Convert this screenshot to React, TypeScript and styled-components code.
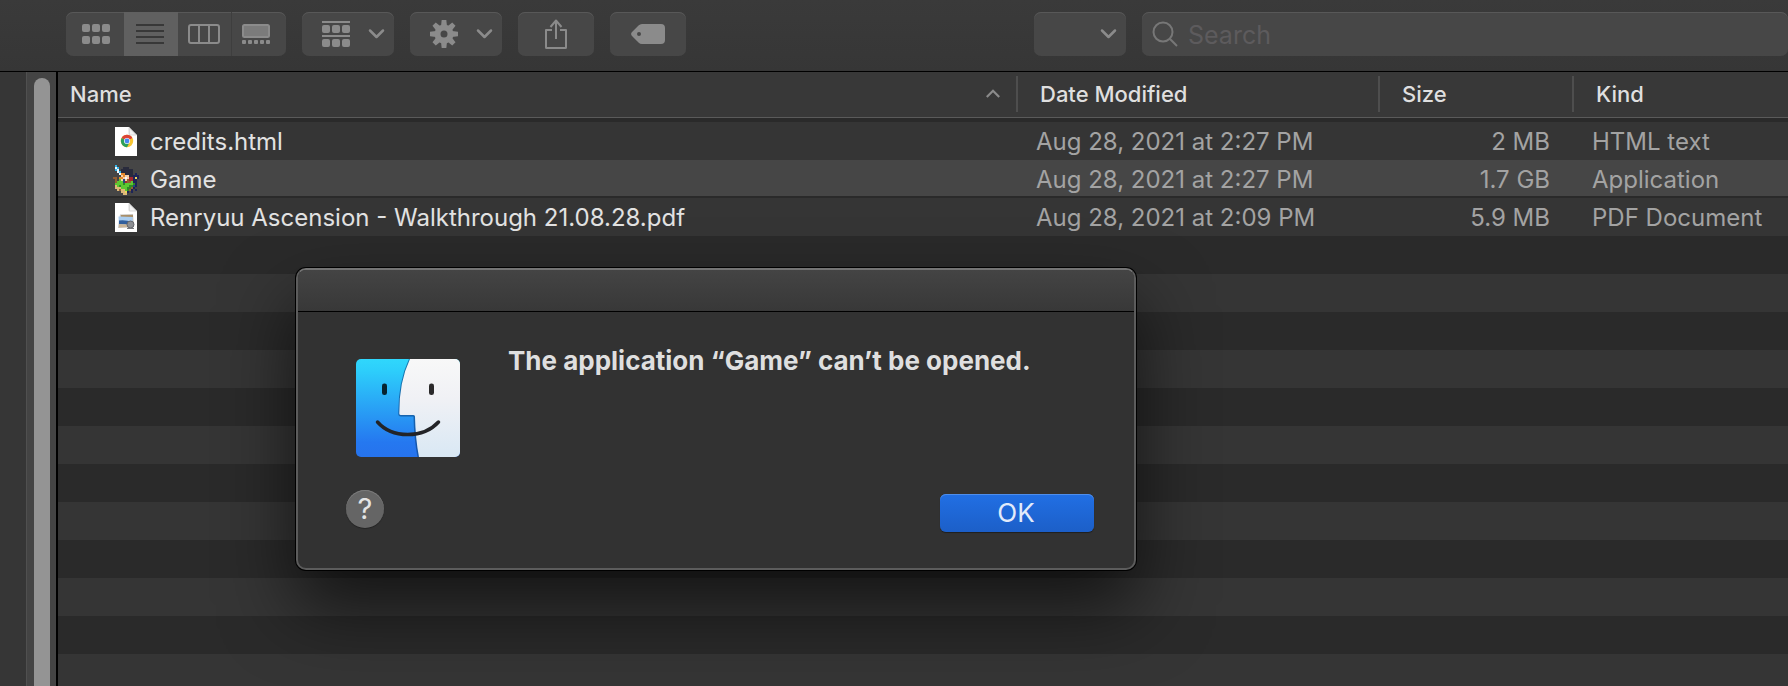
import React from 'react';
import styled, { createGlobalStyle } from 'styled-components';

const GlobalStyle = createGlobalStyle`
  *, *::before, *::after { box-sizing: border-box; }
  body {
    margin: 0;
    background: #2a2a2a;
    font-family: Inter, "Liberation Sans", sans-serif;
    color: #dfdfdf;
  }
  button, input, select { font: inherit; color: inherit; }
`;

const Window = styled.div`
  position: relative;
  display: flex;
  flex-direction: column;
  min-height: 100vh;
  overflow: hidden;
`;

/* ---------- toolbar ---------- */

const Toolbar = styled.header`
  display: flex;
  gap: 16px;
  padding: 12px 0 15px 66px;
  background: linear-gradient(#3a3a3a, #363636);
  border-bottom: 1px solid #000;
`;

const Segments = styled.div`
  display: flex;
  flex: none;
  height: 44px;
  border-radius: 7px;
  overflow: hidden;
  background: #474747;
  box-shadow: inset 0 1px 0 #585858;
`;

const Segment = styled.button<{ $active?: boolean; $divided?: boolean }>`
  display: flex;
  align-items: center;
  justify-content: center;
  width: 54px;
  padding: 0 2px 0 0;
  border: 0;
  border-right: ${(p) => (p.$divided ? '1px solid #3e3e3e' : '0')};
  background: ${(p) => (p.$active ? '#606060' : 'transparent')};
  color: ${(p) => (p.$active ? '#383838' : '#8b8b8b')};
  &:first-child { width: 58px; padding: 0 0 0 2px; }
  &:last-child { padding: 0 6px 0 0; }
`;

const ToolButton = styled.button<{ $menu?: boolean }>`
  display: flex;
  flex: none;
  align-items: center;
  justify-content: ${(p) => (p.$menu ? 'space-between' : 'center')};
  width: ${(p) => (p.$menu ? 92 : 76)}px;
  height: 44px;
  padding: ${(p) => (p.$menu ? '0 9px 0 19px' : '0')};
  border: 0;
  border-radius: 7px;
  background: #474747;
  box-shadow: inset 0 1px 0 #585858;
  color: #8b8b8b;
`;

const Spacer = styled.div`
  flex: 0 1 316px;
`;

const PathMenu = styled.label`
  display: flex;
  flex: none;
  align-items: center;
  width: 92px;
  height: 44px;
  padding-right: 9px;
  border-radius: 7px;
  background: #474747;
  box-shadow: inset 0 1px 0 #585858;
  color: #8b8b8b;
  select {
    flex: 1;
    min-width: 0;
    height: 100%;
    border: 0;
    background: transparent;
    appearance: none;
  }
`;

const SearchField = styled.label`
  display: flex;
  flex: 1;
  align-items: center;
  gap: 10px;
  min-width: 160px;
  height: 44px;
  padding-left: 10px;
  border-radius: 7px;
  background: #474747;
  box-shadow: inset 0 1px 0 #585858;
  color: #777;
  input {
    flex: 1;
    min-width: 0;
    padding: 2px 0 0;
    border: 0;
    outline: 0;
    background: transparent;
    font-size: 25px;
    line-height: 32px;
  }
  input::placeholder { color: #5d5b5d; opacity: 1; }
`;

/* ---------- file list ---------- */

const Content = styled.div`
  display: flex;
  flex: 1;
`;

const Sidebar = styled.aside`
  flex: none;
  width: 27px;
  background: #363636;
  border-right: 1px solid #505050;
`;

const ScrollTrack = styled.div`
  display: flex;
  flex: none;
  width: 31px;
  padding: 6px 0 0 7px;
  background: #444;
  border-right: 2px solid #000;
`;

const ScrollThumb = styled.div`
  width: 16px;
  border-radius: 8px 8px 0 0;
  background: #949494;
`;

const FileArea = styled.main`
  display: flex;
  flex: 1;
  flex-direction: column;
  min-width: 0;
`;

const FileTable = styled.table`
  width: 100%;
  table-layout: fixed;
  border-collapse: separate;
  border-spacing: 0;
`;

const Col = styled.col<{ $width?: number }>`
  width: ${(p) => (p.$width ? `${p.$width}px` : 'auto')};
`;

const HeadCell = styled.th`
  padding: 0;
  border-bottom: 4px solid #2a2a2a;
  font-size: 22px;
  font-weight: 500;
  line-height: 28px;
  text-align: left;
`;

const HeadContent = styled.div<{ $first?: boolean }>`
  display: flex;
  align-items: center;
  justify-content: space-between;
  height: 46px;
  padding: 0 0 2px ${(p) => (p.$first ? 12 : 22)}px;
  background: #383838;
  border-bottom: 1px solid #5a5a5a;
`;

const HeadEnd = styled.span`
  display: flex;
  align-items: center;
  gap: 16px;
  color: #8b8b8b;
`;

const Divider = styled.span`
  width: 2px;
  height: 36px;
  background: #4e4e4e;
`;

const Row = styled.tr<{ $selected?: boolean }>`
  height: 38px;
  background: ${(p) =>
    p.$selected ? 'linear-gradient(#464646 36px, #2a2a2a 36px)' : '#353535'};
`;

const Cell = styled.td<{ $right?: boolean }>`
  padding: ${(p) => (p.$right ? '2px 24px 0 0' : '2px 0 0 18px')};
  color: #a3a3a3;
  font-size: 24px;
  line-height: 36px;
  text-align: ${(p) => (p.$right ? 'right' : 'left')};
  white-space: nowrap;
`;

const NameCell = styled(Cell)`
  padding-left: 55px;
  color: #e2e2e2;
`;

const FileName = styled.div`
  display: flex;
  align-items: center;
  gap: 9px;
  height: 36px;
`;

const EmptyRows = styled.div`
  flex: 1;
  background: repeating-linear-gradient(#2a2a2a 0 38px, #353535 38px 76px);
`;

/* ---------- alert ---------- */

const Alert = styled.section`
  position: absolute;
  top: 268px;
  left: 296px;
  width: 840px;
  border: 2px solid #5c5c5c;
  border-top-color: #747474;
  border-radius: 10px;
  background: #323232;
  box-shadow: 0 0 0 1px #000, 0 36px 72px rgba(0, 0, 0, 0.64);
`;

const AlertTitleBar = styled.div`
  height: 42px;
  border-bottom: 1px solid #000;
  border-radius: 8px 8px 0 0;
  background: linear-gradient(#444, #383838);
`;

const AlertBody = styled.div`
  display: flex;
  gap: 48px;
  padding: 32px 40px 0 58px;
`;

const AlertIcon = styled.div`
  padding-top: 15px;
  svg { display: block; }
`;

const AlertText = styled.h1`
  margin: 0;
  font-size: 26px;
  font-weight: 700;
  line-height: 34px;
  color: #dfdfdf;
`;

const AlertActions = styled.div`
  display: flex;
  justify-content: space-between;
  padding: 33px 40px 36px 48px;
`;

const HelpButton = styled.button`
  width: 38px;
  height: 38px;
  padding: 0;
  border: 0;
  border-radius: 50%;
  background: #656565;
  box-shadow: inset 0 1px 0 #7c7c7c, 0 1px 1px rgba(0, 0, 0, 0.3);
  color: #e4e4e4;
  font-size: 29px;
  line-height: 38px;
`;

const OkButton = styled.button`
  width: 154px;
  height: 38px;
  margin-top: 4px;
  padding: 0 2px 0 0;
  border: 0;
  border-radius: 6px;
  background: linear-gradient(#216fe4, #1c5fc8);
  box-shadow: inset 0 1px 0 #4f8eeb, 0 1px 1px rgba(0, 0, 0, 0.4);
  color: #e2ebfa;
  font-size: 26px;
  line-height: 38px;
`;

/* ---------- icons ---------- */

const IconViewIcon = () => (
  <svg width="28" height="20" viewBox="0 0 28 20" fill="currentColor">
    {[0, 12].map((y) => [0, 10, 20].map((x) => <rect key={`${x}-${y}`} x={x} y={y} width="8" height="8" rx="2" />))}
  </svg>
);

const ListViewIcon = () => (
  <svg width="28" height="20" viewBox="0 0 28 20" fill="currentColor">
    {[0, 6, 12, 18].map((y) => <rect key={y} y={y} width="28" height="2" />)}
  </svg>
);

const ColumnViewIcon = () => (
  <svg width="32" height="20" viewBox="0 0 32 20" fill="none" stroke="currentColor" strokeWidth="2">
    <rect x="1" y="1" width="30" height="18" rx="2" />
    <path d="M11 1v18M21 1v18" />
  </svg>
);

const GalleryViewIcon = () => (
  <svg width="28" height="20" viewBox="0 0 28 20" fill="currentColor">
    <rect x="1" y="1" width="26" height="12" rx="1.5" fill="#7b7b7b" stroke="currentColor" strokeWidth="2" />
    {[0, 6, 12, 18, 24].map((x) => <rect key={x} x={x} y="16" width="4" height="4" rx="1" />)}
  </svg>
);

const GroupIcon = () => (
  <svg width="30" height="28" viewBox="0 0 30 28" fill="currentColor">
    <rect x="1" y="1" width="28" height="2" />
    <rect x="1" y="15" width="28" height="2" />
    {[5, 19].map((y) => [1, 11, 21].map((x) => <rect key={`${x}-${y}`} x={x} y={y} width="8" height="8" rx="2" />))}
  </svg>
);

const GearIcon = () => (
  <svg width="30" height="30" viewBox="-15 -15 30 30" fill="currentColor">
    {[0, 45, 90, 135, 180, 225, 270, 315].map((a) => (
      <path key={a} d="M-3 -8L-2.3 -14H2.3L3 -8Z" transform={`rotate(${a})`} />
    ))}
    <circle r="6.5" fill="none" stroke="currentColor" strokeWidth="6" />
  </svg>
);

const ChevronDownIcon = () => (
  <svg width="17" height="12" viewBox="0 0 17 12" fill="none" stroke="currentColor" strokeWidth="2.5" strokeLinecap="round" strokeLinejoin="round">
    <path d="M2 2.5l6.5 6.5l6.5 -6.5" />
  </svg>
);

const SortIcon = () => (
  <svg width="14" height="9" viewBox="0 0 14 9" fill="none" stroke="currentColor" strokeWidth="2.2">
    <path d="M.8 8L7 1.8L13.2 8" />
  </svg>
);

const ShareIcon = () => (
  <svg width="24" height="32" viewBox="0 0 24 32" fill="none" stroke="currentColor" strokeWidth="2" strokeLinejoin="round">
    <path d="M8 12H2V29.5Q2 30 2.5 30H21.5Q22 30 22 29.5V12H16M12 21V3M6.5 9L12 2.5L17.5 9" />
  </svg>
);

const TagIcon = () => (
  <svg width="34" height="20" viewBox="0 0 34 20" fill="currentColor" fillRule="evenodd">
    <path d="M11 0H30Q34 0 34 4V16Q34 20 30 20H11Q9 20 7.5 18.5L1 12Q-.8 10 1 8L7.5 1.5Q9 0 11 0ZM8 8a2 2 0 1 0 0 4a2 2 0 1 0 0-4Z" />
  </svg>
);

const SearchIcon = () => (
  <svg width="26" height="26" viewBox="0 0 26 26" fill="none" stroke="currentColor" strokeWidth="2">
    <circle cx="11" cy="11" r="9.5" />
    <path d="M17.8 17.8L25 25" />
  </svg>
);

const Sheet = () => (
  <>
    <path d="M2 1H16L24 9V30H2Z" fill="#fff" />
    <path d="M15.5 1L24 9.5H17Q15.5 9.5 15.5 8Z" fill="#d9d9d9" />
    <path d="M17 3.5L22 8.5H17Z" fill="#f3f3f3" />
  </>
);

const HtmlFileIcon = () => (
  <svg width="28" height="32" viewBox="0 0 28 32">
    <Sheet />
    <circle cx="14" cy="15" r="6.2" fill="#f8c633" />
    <path d="M14 15L8.6 11.9A6.2 6.2 0 0 1 19.4 11.9Z" fill="#dc4437" />
    <path d="M14 15L8.6 11.9A6.2 6.2 0 0 0 14 21.2L16.5 16.5Z" fill="#2b9f5c" />
    <circle cx="14" cy="15" r="3" fill="#fff" />
    <circle cx="14" cy="15" r="2.4" fill="#4687ef" />
  </svg>
);

const PdfFileIcon = () => (
  <svg width="28" height="32" viewBox="0 0 28 32">
    <Sheet />
    <path d="M7 12.5L20 12L21 25L5 26Z" fill="#c8c6c2" />
    <path d="M8 13H20V15H8Z" fill="#a98f69" />
    <path d="M5.5 14.5L19.5 15V24L6 25Z" fill="#a9cdf0" />
    <path d="M6 18.5Q12 17.5 19.5 20V23L6 22Z" fill="#315f9d" />
    <path d="M6 22L17 22.5L19 25L6 25.5Z" fill="#c9b497" />
    <circle cx="17.5" cy="22.5" r="3.5" fill="#8d8f93" stroke="#63656a" />
    <path d="M14 26H21V27H14Z" fill="#77797c" />
  </svg>
);

/* The game's sprite, one letter per 2x2 block. */
const SPRITE = [
  '.c...........',
  '.wc..kkk.....',
  '.cw.kkkkkk...',
  '..wckkkkkk...',
  '...wookkkk.n.',
  '....sosskknnn',
  'tt.ooswsrrnyn',
  '.t.gsbstrrnn.',
  '.tgggbrttgnn.',
  '.ggggGggggGn.',
  '.egGggggGGbn.',
  '.eeegggGGtn..',
  '..eteegGtn.n.',
  '....eeyn.n...',
  '.....ee......',
];
const SPRITE_COLORS: Record<string, string> = {
  w: '#f0f8ff', c: '#35b5e8', k: '#292b3c', o: '#e48a2c', s: '#f6cfa6',
  r: '#a3282d', n: '#1d2458', y: '#ecd65c', t: '#946034', g: '#5cc832',
  G: '#2f8a25', b: '#28467f', e: '#ddb878',
};

const GameIcon = () => (
  <svg width="28" height="32" viewBox="0 0 28 32" shapeRendering="crispEdges">
    {SPRITE.flatMap((line, y) =>
      line.split('').map((c, x) =>
        c === '.' ? null : (
          <rect key={`${x}-${y}`} x={x * 2} y={1 + y * 2} width="2" height="2" fill={SPRITE_COLORS[c]} />
        ),
      ),
    )}
  </svg>
);

const FinderIcon = () => (
  <svg width="104" height="98" viewBox="0 0 104 98" role="img" aria-label="Finder">
    <defs>
      <linearGradient id="face-blue" x1="0" y1="0" x2="0" y2="1">
        <stop offset="0" stopColor="#30d7fc" />
        <stop offset="0.12" stopColor="#2dcefb" />
        <stop offset="0.85" stopColor="#2578f0" />
        <stop offset="1" stopColor="#2673ed" />
      </linearGradient>
      <linearGradient id="face-white" x1="0" y1="0" x2="0" y2="1">
        <stop offset="0" stopColor="#f8f8f8" />
        <stop offset="0.4" stopColor="#f0f1f5" />
        <stop offset="1" stopColor="#d9e8f4" />
      </linearGradient>
      <clipPath id="face-shape"><rect width="104" height="98" rx="5" /></clipPath>
    </defs>
    <g clipPath="url(#face-shape)">
      <rect width="104" height="98" fill="url(#face-blue)" />
      <path d="M54 0Q43 23 43.3 55Q43.3 56.5 45 56.5H57Q58.5 56.5 58.5 58Q59 80 62.5 98" fill="none" stroke="#0b417f" strokeWidth="2" opacity="0.6" />
      <path d="M54 0Q43 23 43.3 54.5Q43.3 56 45 56H57.5Q59 56 59 57.5Q59.5 80 63 98H104V0Z" fill="url(#face-white)" />
    </g>
    <rect x="26" y="24.5" width="5" height="11.5" rx="2.3" fill="#062431" />
    <rect x="73" y="24.5" width="5" height="11.5" rx="2.3" fill="#2a292a" />
    <path d="M21.5 63C36 79.5 67 80 82.5 63" fill="none" stroke="#232427" strokeWidth="3.5" strokeLinecap="round" />
  </svg>
);

/* ---------- page ---------- */

const FILES = [
  { name: 'credits.html', date: 'Aug 28, 2021 at 2:27 PM', size: '2 MB', kind: 'HTML text', Icon: HtmlFileIcon },
  { name: 'Game', date: 'Aug 28, 2021 at 2:27 PM', size: '1.7 GB', kind: 'Application', Icon: GameIcon, selected: true },
  { name: 'Renryuu Ascension - Walkthrough 21.08.28.pdf', date: 'Aug 28, 2021 at 2:09 PM', size: '5.9 MB', kind: 'PDF Document', Icon: PdfFileIcon },
];

export default function App() {
  return (
    <Window>
      <GlobalStyle />
      <Toolbar>
        <Segments role="group" aria-label="View">
          <Segment aria-label="Icons"><IconViewIcon /></Segment>
          <Segment aria-label="List" aria-pressed $active><ListViewIcon /></Segment>
          <Segment aria-label="Columns" $divided><ColumnViewIcon /></Segment>
          <Segment aria-label="Gallery"><GalleryViewIcon /></Segment>
        </Segments>
        <ToolButton $menu aria-label="Group"><GroupIcon /><ChevronDownIcon /></ToolButton>
        <ToolButton $menu aria-label="Actions"><GearIcon /><ChevronDownIcon /></ToolButton>
        <ToolButton aria-label="Share"><ShareIcon /></ToolButton>
        <ToolButton aria-label="Tags"><TagIcon /></ToolButton>
        <Spacer />
        <PathMenu>
          <select aria-label="Location"><option value="" /></select>
          <ChevronDownIcon />
        </PathMenu>
        <SearchField>
          <SearchIcon />
          <input type="text" placeholder="Search" aria-label="Search" />
        </SearchField>
      </Toolbar>

      <Content>
        <Sidebar />
        <ScrollTrack><ScrollThumb /></ScrollTrack>
        <FileArea>
          <FileTable>
            <colgroup>
              <Col />
              <Col $width={362} />
              <Col $width={194} />
              <Col $width={214} />
            </colgroup>
            <thead>
              <tr>
                <HeadCell scope="col" aria-sort="ascending">
                  <HeadContent $first>Name<HeadEnd><SortIcon /><Divider /></HeadEnd></HeadContent>
                </HeadCell>
                <HeadCell scope="col"><HeadContent>Date Modified<Divider /></HeadContent></HeadCell>
                <HeadCell scope="col"><HeadContent>Size<Divider /></HeadContent></HeadCell>
                <HeadCell scope="col"><HeadContent>Kind</HeadContent></HeadCell>
              </tr>
            </thead>
            <tbody>
              {FILES.map(({ name, date, size, kind, Icon, selected }) => (
                <Row key={name} $selected={selected}>
                  <NameCell><FileName><Icon />{name}</FileName></NameCell>
                  <Cell>{date}</Cell>
                  <Cell $right>{size}</Cell>
                  <Cell>{kind}</Cell>
                </Row>
              ))}
            </tbody>
          </FileTable>
          <EmptyRows />
        </FileArea>
      </Content>

      <Alert role="alertdialog" aria-labelledby="alert-text">
        <AlertTitleBar />
        <AlertBody>
          <AlertIcon><FinderIcon /></AlertIcon>
          <AlertText id="alert-text">The application “Game” can’t be opened.</AlertText>
        </AlertBody>
        <AlertActions>
          <HelpButton aria-label="Help">?</HelpButton>
          <OkButton>OK</OkButton>
        </AlertActions>
      </Alert>
    </Window>
  );
}
